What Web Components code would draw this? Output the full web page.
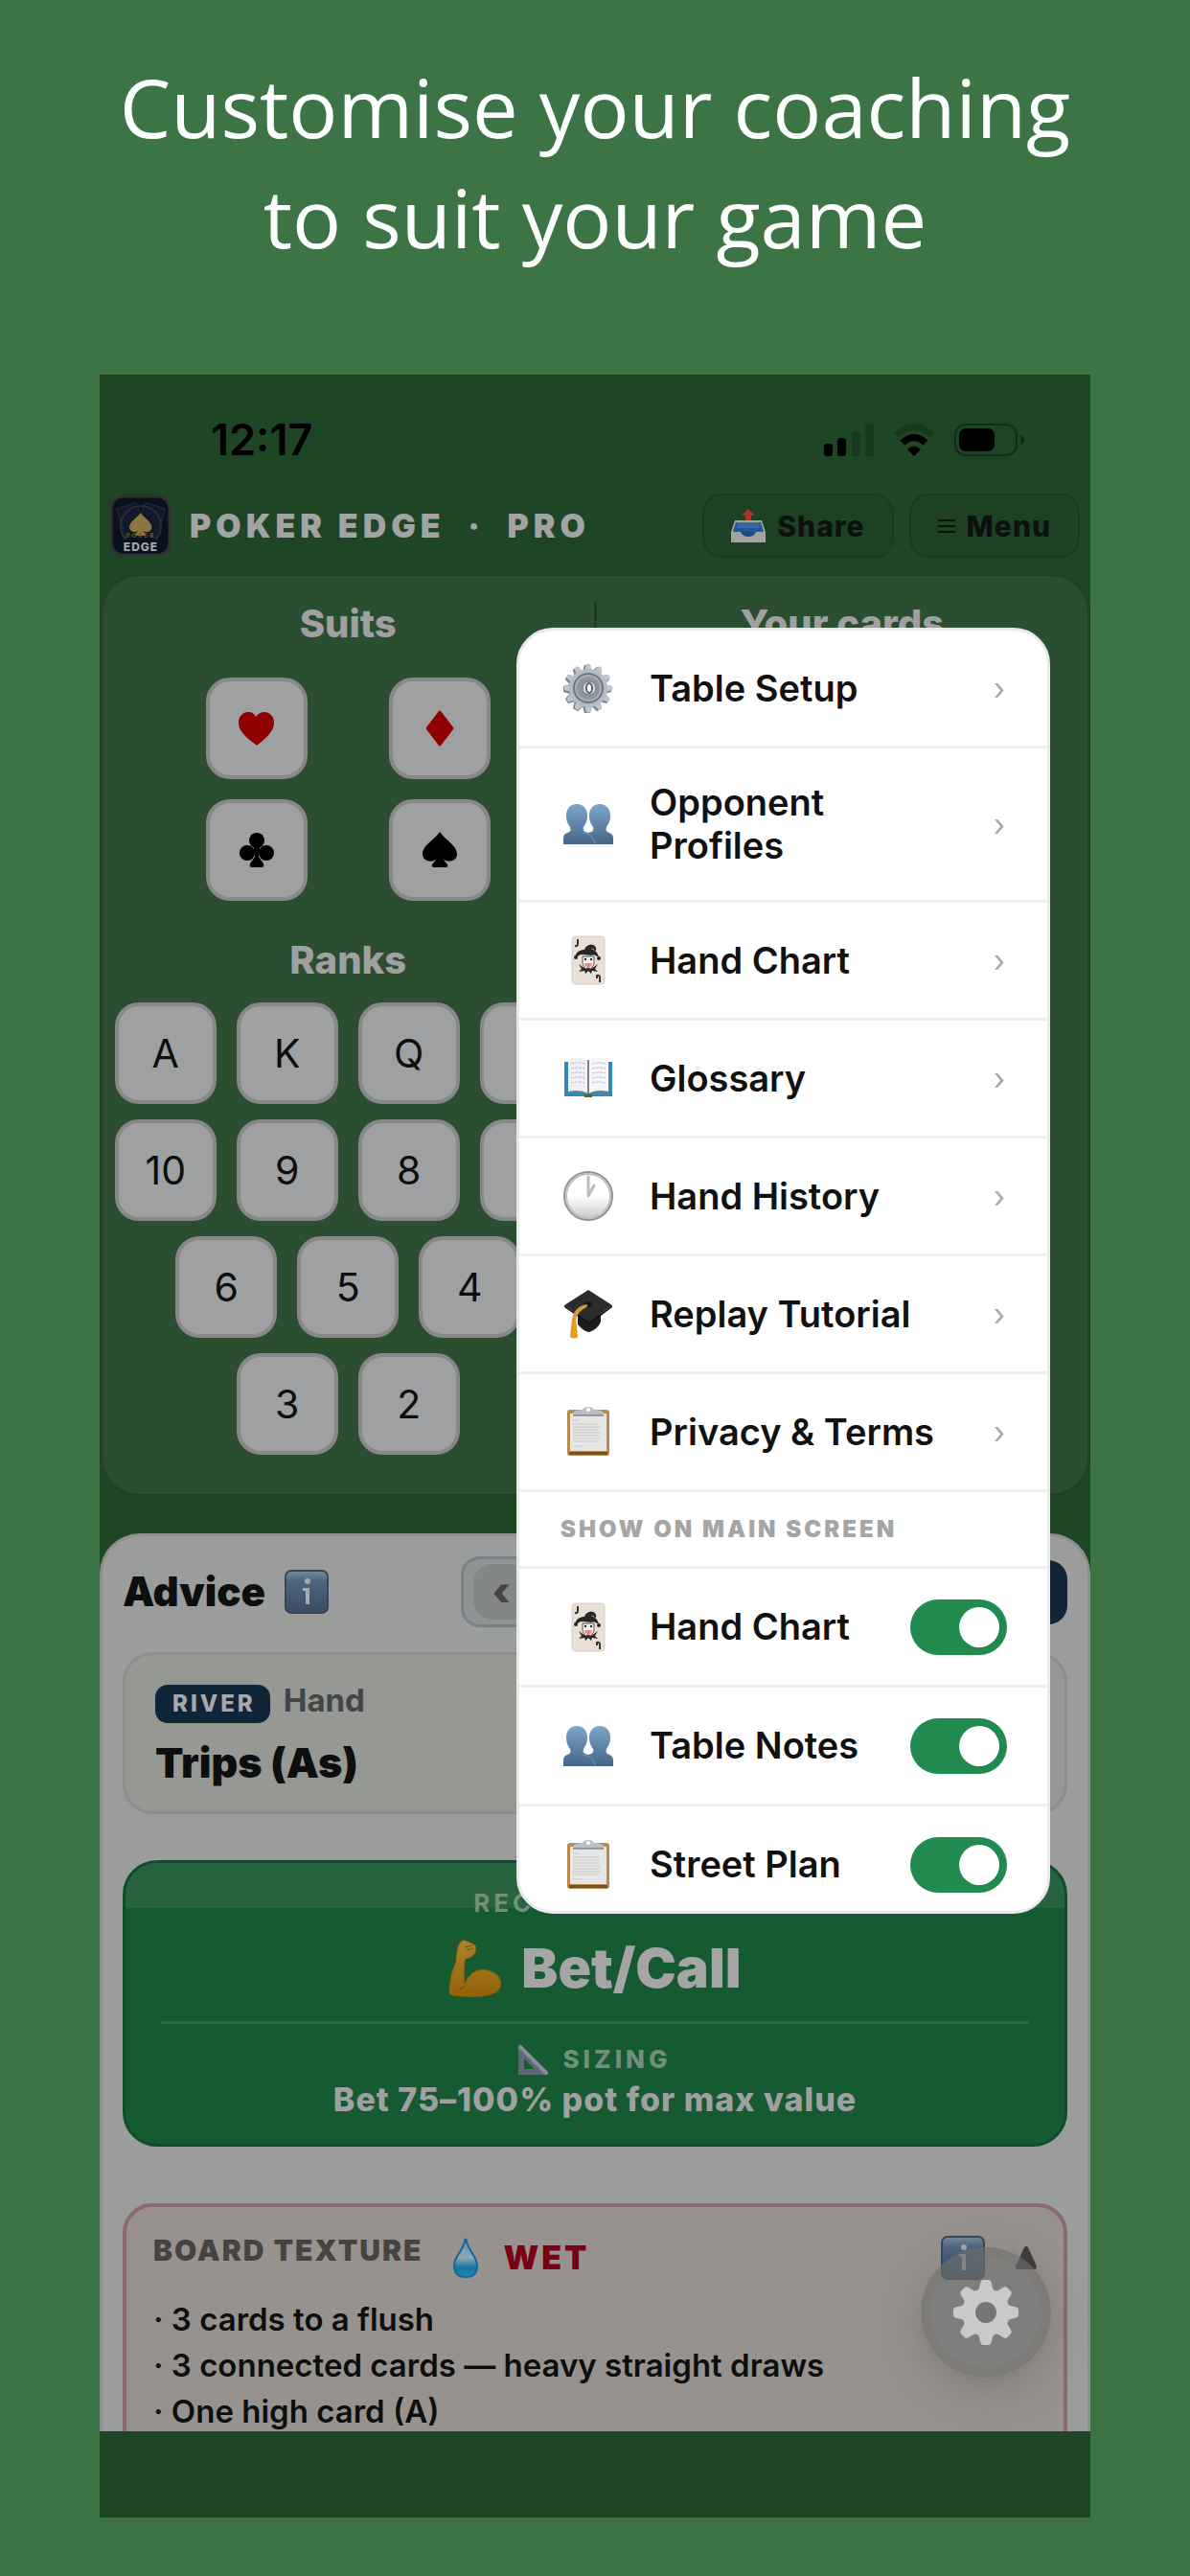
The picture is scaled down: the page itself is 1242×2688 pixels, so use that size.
<!DOCTYPE html>
<html lang="en">
<head>
<meta charset="utf-8">
<meta name="viewport" content="width=device-width, initial-scale=1">
<title>Poker Edge Pro</title>
<style>
  body {
    margin: 0;
    background: #3c7445;
    font-family: Inter, "Liberation Sans", sans-serif;
    color: #0d0e0e;
  }
</style>
</head>
<body>
<promo-page>
  <span slot="headline">Customise your coaching<br>to suit your game</span>
  <phone-screen>
    <status-bar time="12:17"></status-bar>
    <app-header></app-header>
    <card-picker></card-picker>
    <advice-panel></advice-panel>
    <settings-menu slot="overlay">
      <menu-item icon="gear">Table Setup</menu-item>
      <menu-item icon="people">Opponent Profiles</menu-item>
      <menu-item icon="joker">Hand Chart</menu-item>
      <menu-item icon="book">Glossary</menu-item>
      <menu-item icon="clock">Hand History</menu-item>
      <menu-item icon="cap">Replay Tutorial</menu-item>
      <menu-item icon="clipboard">Privacy &amp; Terms</menu-item>
      <menu-heading>SHOW ON MAIN SCREEN</menu-heading>
      <toggle-item icon="joker">Hand Chart</toggle-item>
      <toggle-item icon="people">Table Notes</toggle-item>
      <toggle-item icon="clipboard">Street Plan</toggle-item>
    </settings-menu>
    <settings-fab slot="overlay"></settings-fab>
  </phone-screen>
</promo-page>

<script>
const around = (n, cx, cy, shape) =>
  Array.from({ length: n }, (_, i) => `<g transform="rotate(${(i * 360) / n} ${cx} ${cy})">${shape}</g>`).join("");

const ICONS = {
  gear: {
    box: "0 0 52 52",
    svg: `
      <g fill="#7d8288">${around(12, 25, 27, `<path d="M20 9 22 2h6l2 7z"/>`)}</g>
      <g fill="#bcc7d2">${around(12, 26, 26, `<path d="M22 8 24 1q2-1 4 0l2 7z"/>`)}</g>
      <circle cx="26" cy="26" r="20" fill="#b4bcc6"/>
      <circle cx="26" cy="26" r="16" fill="#70767d"/>
      <circle cx="26" cy="26" r="13" fill="#8f959c" stroke="#a9b0b8" stroke-width="2"/>
      <circle cx="27" cy="26" r="7" fill="#d5dae0" stroke="#6b7178"/>
      <ellipse cx="27" cy="26" rx="3" ry="5" fill="#fff" stroke="#596069" stroke-width="2"/>`,
  },
  people: {
    box: "0 0 52 52",
    svg: `
      <defs><linearGradient id="p" x2="0" y2="1"><stop stop-color="#7da5c8"/><stop offset="1" stop-color="#456589"/></linearGradient></defs>
      <path fill="url(#p)" d="M14 5c7 0 11 5 11 12 0 6-2 9-4 12-1 4 1 5 5 6 4-1 6-2 5-6-2-3-4-6-4-12 0-7 4-12 11-12s11 5 11 12c0 6-2 9-4 12-1 4 0 5 3 6 3 1 4 3 4 6v6H0v-6c0-3 1-5 4-6 3-1 4-2 3-6-2-3-4-6-4-12C3 10 7 5 14 5z"/>
      <path d="M20 35c8 1 11 4 13 11" fill="none" stroke="#6b9fbd"/>
      <path d="M26 5v26" stroke="#fff" stroke-opacity=".6"/>`,
  },
  joker: {
    box: "0 0 52 52",
    svg: `
      <rect x="9" y="1" width="34" height="50" rx="3" fill="#e9dfd4" stroke="#d9d0c7"/>
      <path d="M15 4v5q0 3-3 2M38 49v-5q0-3-3-2v3" fill="none" stroke="#333" stroke-width="2"/>
      <path d="M12 23c1-6 6-8 10-8 1-4 5-6 9-5 4 2 4 6 2 6-1 0-1-3-4-2 4 1 7 4 8 9-3-2-5-3-8-2l-9-1c-3 0-5 1-7 4z" fill="#272727"/>
      <circle cx="13" cy="23" r="2" fill="#272727"/><circle cx="37" cy="24" r="2" fill="#272727"/>
      <path d="M20 22h12v8l-3 5h-6l-3-5z" fill="#f4eeea" stroke="#555" stroke-width="1"/>
      <path d="M22 25h2M28 25h2" stroke="#222" stroke-width="2"/>
      <path d="M22 29h8q-1 5-4 5t-4-5z" fill="#ee8980"/>
      <path d="M16 30l7 5 3-1 3 1 7-5-3 5 3 3-6-1-1 3-3-3-3 3-1-3-6 1 3-3z" fill="#272727"/>`,
  },
  book: {
    box: "0 0 52 52",
    svg: `
      <path d="M1 9h50v36H1z" fill="#318ab9"/>
      <path d="M5 42q11-3 21 1 10-4 21-1v-3H5z" fill="#77777a"/>
      <path d="M5 6q12-3 21 1v35q-9-5-21-2z" fill="#f0f0f4"/>
      <path d="M47 6q-12-3-21 1v35q9-5 21-2z" fill="#f6f6f9"/>
      <path d="M26 7v35" stroke="#818188" stroke-width="2"/>
      <path d="M8 11q8-2 14 0M8 16q8-2 14 0M8 21q8-2 14 0M8 26q8-2 14 0M8 31q8-2 14 0M30 11q8-2 14 0M30 16q8-2 14 0M30 21q8-2 14 0M30 26q8-2 14 0M30 31q8-2 14 0" fill="none" stroke="#bcbcd0" stroke-dasharray="3 1"/>
      <path d="M22 43h8v3h-8z" fill="#3f6741"/>`,
  },
  clock: {
    box: "0 0 52 52",
    svg: `
      <defs><linearGradient id="c" x2="0" y2="1"><stop offset=".5" stop-color="#fff"/><stop offset="1" stop-color="#c6c6c6"/></linearGradient></defs>
      <circle cx="26" cy="26" r="25" fill="url(#c)" stroke="#8d9297" stroke-width="2"/>
      <circle cx="26" cy="26" r="23" fill="none" stroke="#b9c3cc" stroke-width="2"/>
      <path d="M26 6v20l6-11" fill="none" stroke="#bcbcbc" stroke-width="3" stroke-linecap="round" stroke-linejoin="round"/>`,
  },
  cap: {
    box: "0 0 52 52",
    svg: `
      <path d="M15 27v10q7 8 12 8 9-3 12-11V24z" fill="#1d1d1d"/>
      <path d="M26 1 51 17 27 35 1 17z" fill="#2c2c2c"/>
      <path d="M1 17 27 35l24-18v2L27 37 1 19z" fill="#111"/>
      <ellipse cx="26" cy="16" rx="4" ry="3" fill="#151515"/>
      <path d="M25 17q-13 2-15 15M24 18q-10 4-12 14" fill="none" stroke="#d89a35" stroke-width="2"/>
      <path d="M9 31h4l2 19q-4 3-8 0z" fill="#e39b20"/>`,
  },
  clipboard: {
    box: "0 0 52 52",
    svg: `
      <rect x="4" y="3" width="44" height="48" rx="3" fill="#b88b4d"/>
      <path d="M6 47h40v3H6z" fill="#74502b"/>
      <path d="M7 7h38v39H7z" fill="#e6e6e6"/>
      <path d="M10 14h7M10 18h27M10 21h28M10 24h27M10 27h29M10 30h28M10 33h28M10 36h26M11 41h8" stroke="#c8c8c8"/>
      <path d="M10 9V6q3-3 10-3 1-3 6-3t6 3q7 0 10 3v3z" fill="#b9c0c8"/>
      <path d="M10 9h32" stroke="#69615b"/><circle cx="26" cy="3" r="2" fill="#fff"/>`,
  },
  heart: { box: "0 0 37 34", svg: `<path fill="#900000" d="M18 34C8 27 0 20 0 11 0 4 5 0 10 0c4 0 7 2 8 5 2-3 5-5 9-5 5 0 10 4 10 11 0 9-8 16-17 23q-1 1-2 0z"/>` },
  diamond: { box: "0 0 30 38", svg: `<path fill="#900000" d="M14 1q1-1 2 0l13 17q1 1 0 2L16 37q-1 1-2 0L1 20q-1-1 0-2z"/>` },
  club: { box: "0 0 36 36", svg: `<g fill="#000"><circle cx="18" cy="8" r="8"/><circle cx="8" cy="21" r="8"/><circle cx="28" cy="21" r="8"/><path d="M15 12h6v8l-1 5 5 7q1 4-2 4H13q-3 0-2-4l5-7-1-5z"/></g>` },
  spade: { box: "0 0 36 38", svg: `<path fill="#000" d="M17 1q1-1 2 0c3 6 17 13 17 22 0 8-10 10-15 5l5 6q1 3-2 3H12q-3 0-2-3l5-6C10 33 0 31 0 23 0 14 14 7 17 1z"/>` },
  share: {
    box: "0 0 36 36",
    svg: `
      <path d="M18 0 25 7h-4v6h-6V7h-4z" fill="#ab332c"/>
      <path d="M4 12h28l4 12v11H0V24z" fill="#a5a39f"/>
      <path d="M5 14h26l3 10H2z" fill="#23578f"/>
      <path d="M7 14h22l1 6H6z" fill="#3469a8"/>
      <path d="M2 24h8q2 5 8 5t8-5h8l1 10H1z" fill="#a5a39f"/>
      <path d="M10 24q2 5 8 5t8-5z" fill="#1c4c80"/>`,
  },
  info: {
    box: "0 0 46 46",
    svg: `
      <defs><linearGradient id="i" x2="0" y2="1"><stop stop-color="#7a8a99"/><stop offset=".25" stop-color="#4d6580"/><stop offset="1" stop-color="#3c4c60"/></linearGradient></defs>
      <rect x="1" y="1" width="44" height="44" rx="6" fill="url(#i)" stroke="#31485f" stroke-width="2"/>
      <circle cx="24" cy="12" r="3" fill="#a5abb0"/>
      <path d="M19 19h7v17h-4V22h-3z" fill="#a5abb0"/>`,
  },
  arm: {
    box: "0 0 56 60",
    svg: `
      <defs><linearGradient id="a" x2="0" y2="1"><stop stop-color="#ad842d"/><stop offset="1" stop-color="#936207"/></linearGradient></defs>
      <path fill="url(#a)" stroke="#8a5b0b" d="M14 1q3-1 6 1l7 3q3 3 1 9-5 6-10 6-3 5-1 27 5-15 19-16 17 2 19 14 0 12-20 14-18 1-31-1-3 0-3-4 0-17 7-30 0-18 6-23z"/>
      <path d="M17 48q-2 3-5 3M17 8l8-2M19 11l7-2" fill="none" stroke="#734b08"/>`,
  },
  ruler: { box: "0 0 32 32", svg: `<path fill="#5f6878" fill-rule="evenodd" d="M0 0 32 32H0zM6 15v11h11z"/><path d="M1 2 30 31" stroke="#858d9c" stroke-width="4"/>` },
  drop: {
    box: "0 0 26 42",
    svg: `
      <defs><linearGradient id="d" x2="0" y2="1"><stop stop-color="#5b93a8"/><stop offset=".5" stop-color="#8ba9b2"/><stop offset=".75" stop-color="#1671a4"/><stop offset="1" stop-color="#2889ae"/></linearGradient></defs>
      <path fill="url(#d)" stroke="#10699c" stroke-width="2" d="M13 1q2 8 8 17 4 7 4 11 0 12-12 12T1 29q0-4 4-11 6-9 8-17z"/>`,
  },
  triangle: { box: "0 0 22 24", svg: `<path fill="#3f3d3c" d="M9 1q2-2 4 0l9 20q0 3-2 3H2q-2 0-2-3z"/>` },
  bars: { box: "0 0 18 14", svg: `<path d="M0 1h18M0 7h18M0 13h18" stroke="#0c110d" stroke-width="2"/>` },
  cog: {
    box: "0 0 68 68",
    svg: `<g fill="#cacac8"><circle cx="34" cy="34" r="25"/>${around(8, 34, 34, `<path d="M24 13q3-2 4-9 1-4 3-4h6q2 0 3 4 1 7 4 9z"/>`)}</g><circle cx="34" cy="34" r="11" fill="#787674"/>`,
  },
  signal: {
    box: "0 0 52 34",
    svg: `<rect y="21" width="9" height="13" rx="3"/><rect x="14" y="15" width="9" height="19" rx="3"/><g fill="#193820"><rect x="29" y="8" width="9" height="26" rx="3"/><rect x="43" width="9" height="34" rx="3"/></g>`,
  },
  wifi: {
    box: "0 0 44 34",
    svg: `<g fill="none" stroke-width="7"><path d="M3 12q19-17 38 0" stroke="#193820"/><path d="M10 20q12-11 24 0" stroke="#000"/></g><path d="M15 27q7-7 14 0l-7 7z"/>`,
  },
  battery: {
    box: "0 0 73 34",
    svg: `<rect x="1" y="1" width="64" height="32" rx="11" fill="none" stroke="#152c19" stroke-width="2"/><rect x="5" y="5" width="37" height="24" rx="7"/><path d="M69 12q4 1 4 5t-4 5z" fill="#152c19"/>`,
  },
  logo: {
    box: "0 0 63 63",
    svg: `
      <rect x="1" y="1" width="61" height="61" rx="13" fill="#071120" stroke="#352f2b" stroke-width="3"/>
      <g fill="#111829" stroke="#222c3b"><rect x="11" y="10" width="22" height="32" rx="2" transform="rotate(-18 22 26)"/><rect x="31" y="10" width="22" height="32" rx="2" transform="rotate(18 42 26)"/></g>
      <circle cx="32" cy="32" r="21" fill="none" stroke="#282e38" stroke-width="2"/>
      <path transform="translate(20 18) scale(.65)" fill="#8e7642" d="M17 1q1-1 2 0c3 6 17 13 17 22 0 8-10 10-15 5l5 6q1 3-2 3H12q-3 0-2-3l5-6C10 33 0 31 0 23 0 14 14 7 17 1z"/>
      <text x="32" y="44" text-anchor="middle" font-size="6" font-weight="700" letter-spacing="2" fill="#6b5831">POKER</text>
      <path d="M7 46h49v11H7z" fill="#071120"/>
      <text x="32" y="58" text-anchor="middle" font-size="12" font-weight="800" letter-spacing="1" fill="#a8a8a8">EDGE</text>`,
  },
};

class BaseElement extends HTMLElement {
  constructor() {
    super();
    this.attachShadow({ mode: "open" });
  }

  connectedCallback() {
    this.shadowRoot.innerHTML = `
      <style>
        * { box-sizing: border-box; }
        h1, h2, h3, p, ul { margin: 0; padding: 0; }
        button { font: inherit; color: inherit; padding: 0; border: 0; background: none; cursor: pointer; }
      </style>
      ${this.template()}`;
  }
}

class AppIcon extends BaseElement {
  template() {
    const icon = ICONS[this.getAttribute("name")];
    const [, , w, h] = icon.box.split(" ");
    return `
      <style>:host { display: block; flex: none; } svg { display: block; overflow: visible; }</style>
      <svg viewBox="${icon.box}" width="${w}" height="${h}" aria-hidden="true">${icon.svg}</svg>`;
  }
}

class PromoPage extends BaseElement {
  template() {
    return `
      <style>
        :host { display: block; padding: 54px 104px 61px; }
        h1 {
          margin: 0 -60px 107px; text-align: center; color: #fff;
          font: 400 85px/115px "Open Sans", "Noto Sans", sans-serif;
        }
      </style>
      <h1><slot name="headline"></slot></h1>
      <slot></slot>`;
  }
}

class PhoneScreen extends BaseElement {
  template() {
    return `
      <style>
        :host { display: block; position: relative; background: #1f4624; padding-bottom: 90px; }
      </style>
      <slot></slot>
      <slot name="overlay"></slot>`;
  }
}

class StatusBar extends BaseElement {
  template() {
    return `
      <style>
        :host {
          display: flex; align-items: center; justify-content: space-between;
          height: 112px; padding: 24px 69px 0 116px; box-sizing: border-box; color: #000;
        }
        time { font-size: 45px; line-height: 48px; font-weight: 600; }
        div { display: flex; gap: 20px; }
      </style>
      <time>${this.getAttribute("time")}</time>
      <div><app-icon name="signal"></app-icon><app-icon name="wifi"></app-icon><app-icon name="battery"></app-icon></div>`;
  }
}

class AppHeader extends BaseElement {
  template() {
    return `
      <style>
        :host { display: flex; align-items: center; padding: 12px 11px 16px; }
        h1 {
          flex: 1; margin-left: 20px; color: #a3a3a3; white-space: pre;
          font-size: 34px; line-height: 40px; font-weight: 900; letter-spacing: 5px;
        }
        button {
          display: flex; align-items: center; justify-content: center; gap: 12px;
          height: 67px; padding: 0 28px; margin-left: 16px;
          border: 2px solid #1a3a20; border-radius: 20px; background: #1e4023;
          color: #0c110d; font-size: 30px; font-weight: 800; letter-spacing: 1px;
        }
      </style>
      <app-icon name="logo"></app-icon>
      <h1>POKER EDGE  ·  PRO</h1>
      <button><app-icon name="share"></app-icon>Share</button>
      <button><app-icon name="bars"></app-icon>Menu</button>`;
  }
}

class CardKey extends BaseElement {
  template() {
    return `
      <style>
        :host { display: block; flex: none; }
        button {
          display: flex; align-items: center; justify-content: center;
          width: 106px; height: 106px; border: 4px solid #888; border-radius: 25px;
          background: #9fa0a1; font-size: 41px; line-height: 48px;
        }
      </style>
      <button><slot></slot></button>`;
  }
}

class CardPicker extends BaseElement {
  template() {
    const row = (ranks) => `<div class="row">${ranks.map((r) => `<card-key>${r}</card-key>`).join("")}</div>`;
    const suits = ["heart", "diamond", "club", "spade"];
    return `
      <style>
        :host {
          display: grid; grid-template-columns: 1fr 3px 1fr; padding: 26px 0 41px;
          border: 3px solid #223f27; border-radius: 42px; background: #2b4e30;
        }
        h2 { text-align: center; color: #a0a0a0; font-size: 40px; line-height: 48px; font-weight: 800; }
        .line { background: #1f3a24; }
        .suits { display: grid; grid-template-columns: auto auto; justify-content: center; gap: 21px 85px; margin: 32px 0 38px; }
        .ranks { display: grid; gap: 16px; margin-top: 20px; }
        .row { display: flex; justify-content: center; gap: 21px; }
      </style>
      <section>
        <h2>Suits</h2>
        <div class="suits">${suits.map((s) => `<card-key aria-label="${s}"><app-icon name="${s}"></app-icon></card-key>`).join("")}</div>
        <h2>Ranks</h2>
        <div class="ranks">
          ${row(["A", "K", "Q", "J"])}
          ${row([10, 9, 8, 7])}
          ${row([6, 5, 4])}
          ${row([3, 2])}
        </div>
      </section>
      <div class="line"></div>
      <section><h2>Your cards</h2></section>`;
  }
}

class AdvicePanel extends BaseElement {
  template() {
    return `
      <style>
        :host {
          display: block; box-sizing: border-box; height: 937px; overflow: hidden; margin-top: 38px; padding: 21px 21px 0;
          border: 3px solid #8d8e8e; border-bottom: 0; border-radius: 42px 42px 0 0; background: #9b9d9c;
        }
        header { display: flex; align-items: center; gap: 20px; }
        h2 { font-size: 42px; line-height: 48px; font-weight: 900; }
        .steps {
          flex: 1; display: flex; align-items: center; height: 74px; margin-left: 118px; padding: 0 10px;
          border: 3px solid #76838a; border-radius: 20px; background: #8f9391;
        }
        .steps button { width: 58px; height: 58px; border-radius: 20px; background: #838788; color: #454545; font-size: 40px; font-weight: 900; line-height: 48px; }
        .next { width: 180px; height: 67px; border-radius: 20px; background: #112539; }
      </style>
      <header>
        <h2>Advice</h2>
        <app-icon name="info"></app-icon>
        <div class="steps"><button aria-label="Previous">‹</button></div>
        <button class="next" aria-label="Next"></button>
      </header>
      <hand-box></hand-box>
      <action-box></action-box>
      <board-box></board-box>`;
  }
}

class HandBox extends BaseElement {
  template() {
    return `
      <style>
        :host {
          display: block; margin-top: 26px; padding: 31px 31px 26px;
          border: 3px solid #8c8e8c; border-radius: 31px; background: #969894;
        }
        div { display: flex; gap: 14px; }
        .badge {
          padding: 0 15px 0 18px; border-radius: 13px; background: #112539; color: #a8a8a8;
          font-size: 24px; line-height: 40px; font-weight: 800; letter-spacing: 3px;
        }
        h3 { color: #454545; font-size: 33px; line-height: 32px; font-weight: 700; }
        p { margin-top: 16px; font-size: 43px; line-height: 50px; font-weight: 900; }
      </style>
      <div><span class="badge">RIVER</span><h3>Hand</h3></div>
      <p>Trips (As)</p>`;
  }
}

class ActionBox extends BaseElement {
  template() {
    return `
      <style>
        :host {
          display: block; margin-top: 48px; padding: 27px 37px 24px; text-align: center;
          border: 3px solid #104d28; border-radius: 36px; color: #a5a5a5;
          background: linear-gradient(#27633f 47px, #155a30 47px);
        }
        .label { color: #738f7b; font-size: 26px; line-height: 30px; font-weight: 700; letter-spacing: 4px; }
        .label.sizing { line-height: 32px; font-weight: 800; }
        h2 { display: flex; justify-content: center; align-items: center; gap: 20px; margin: 18px 0 20px; font-size: 57px; line-height: 70px; font-weight: 900; }
        hr { height: 3px; margin: 0 0 21px; border: 0; background: #2b6843; }
        .sizing { display: flex; justify-content: center; gap: 14px; }
        .size { margin-top: 4px; color: #a0a0a0; font-size: 34px; line-height: 44px; font-weight: 800; letter-spacing: 1px; }
      </style>
      <p class="label">RECOMMENDED</p>
      <h2><app-icon name="arm"></app-icon>Bet/Call</h2>
      <hr>
      <p class="label sizing"><app-icon name="ruler"></app-icon>SIZING</p>
      <p class="size">Bet 75–100% pot for max value</p>`;
  }
}

class BoardBox extends BaseElement {
  template() {
    return `
      <style>
        :host {
          display: block; margin-top: 59px; padding: 32px 28px;
          border: 4px solid #8e686f; border-radius: 31px; background: #98928f;
        }
        header { display: flex; align-items: center; height: 42px; }
        h3 { align-self: flex-start; margin-right: 32px; color: #454443; font-size: 30px; line-height: 26px; font-weight: 900; letter-spacing: 2px; }
        strong { flex: 1; margin-left: 26px; color: #7a0015; font-size: 34px; line-height: 42px; font-weight: 900; letter-spacing: 3px; }
        button { margin-left: 32px; }
        ul { margin-top: 19px; list-style: none; font-size: 33px; line-height: 48px; font-weight: 600; }
      </style>
      <header>
        <h3>BOARD TEXTURE</h3>
        <app-icon name="drop"></app-icon>
        <strong>WET</strong>
        <app-icon name="info"></app-icon>
        <button aria-label="Collapse"><app-icon name="triangle"></app-icon></button>
      </header>
      <ul>
        <li>· 3 cards to a flush</li>
        <li>· 3 connected cards — heavy straight draws</li>
        <li>· One high card (A)</li>
      </ul>`;
  }
}

class SettingsMenu extends BaseElement {
  template() {
    return `
      <style>
        :host {
          display: block; position: absolute; top: 264px; right: 42px; width: 557px; height: 1342px;
          box-sizing: border-box; overflow: hidden; z-index: 2;
          border: 3px solid #e9e8ea; border-radius: 38px; background: #fff; color: #111;
        }
      </style>
      <slot></slot>`;
  }
}

const ROW_STYLE = `
  :host { display: block; border-bottom: 3px solid #f0f0f2; font-size: 38px; line-height: 45px; font-weight: 600; }
  .row { display: flex; align-items: center; gap: 38px; width: 100%; padding: 0 44px 0 46px; text-align: left; }
  .label { flex: 1; }
`;

class MenuItem extends BaseElement {
  template() {
    return `
      <style>
        ${ROW_STYLE}
        .row { min-height: 120px; padding-top: 34px; padding-bottom: 34px; }
        .arrow { color: #a8a8a8; font-weight: 400; font-size: 32px; }
      </style>
      <button class="row">
        <app-icon name="${this.getAttribute("icon")}"></app-icon>
        <span class="label"><slot></slot></span>
        <span class="arrow">›</span>
      </button>`;
  }
}

class MenuHeading extends BaseElement {
  template() {
    return `
      <style>
        :host {
          display: block; padding: 24px 43px 23px; border-bottom: 3px solid #f0f0f2; color: #a5a5a5;
          font-size: 24px; line-height: 30px; font-weight: 900; letter-spacing: 3px;
        }
      </style>
      <slot></slot>`;
  }
}

class ToggleItem extends BaseElement {
  template() {
    return `
      <style>
        ${ROW_STYLE}
        .row { min-height: 121px; padding-right: 42px; }
        input {
          flex: none; appearance: none; width: 101px; height: 58px; margin: 0; padding: 8px;
          display: flex; align-items: center; border-radius: 29px; background: #bbb;
        }
        input::before { content: ""; width: 42px; height: 42px; border-radius: 50%; background: #fff; }
        input:checked { background: #218a4e; justify-content: flex-end; }
      </style>
      <label class="row">
        <app-icon name="${this.getAttribute("icon")}"></app-icon>
        <span class="label"><slot></slot></span>
        <input type="checkbox" role="switch" checked>
      </label>`;
  }
}

class SettingsFab extends BaseElement {
  template() {
    return `
      <style>
        :host { display: block; position: absolute; right: 41px; bottom: 146px; }
        button {
          display: flex; align-items: center; justify-content: center; width: 136px; height: 136px;
          border: 10px solid rgba(90, 88, 86, .1); border-radius: 50%; background: rgba(112, 114, 112, .6);
          box-shadow: 0 12px 40px rgba(60, 50, 60, .25);
        }
      </style>
      <button aria-label="Settings"><app-icon name="cog"></app-icon></button>`;
  }
}

customElements.define("app-icon", AppIcon);
customElements.define("promo-page", PromoPage);
customElements.define("phone-screen", PhoneScreen);
customElements.define("status-bar", StatusBar);
customElements.define("app-header", AppHeader);
customElements.define("card-key", CardKey);
customElements.define("card-picker", CardPicker);
customElements.define("hand-box", HandBox);
customElements.define("action-box", ActionBox);
customElements.define("board-box", BoardBox);
customElements.define("advice-panel", AdvicePanel);
customElements.define("menu-item", MenuItem);
customElements.define("menu-heading", MenuHeading);
customElements.define("toggle-item", ToggleItem);
customElements.define("settings-menu", SettingsMenu);
customElements.define("settings-fab", SettingsFab);
</script>
</body>
</html>
